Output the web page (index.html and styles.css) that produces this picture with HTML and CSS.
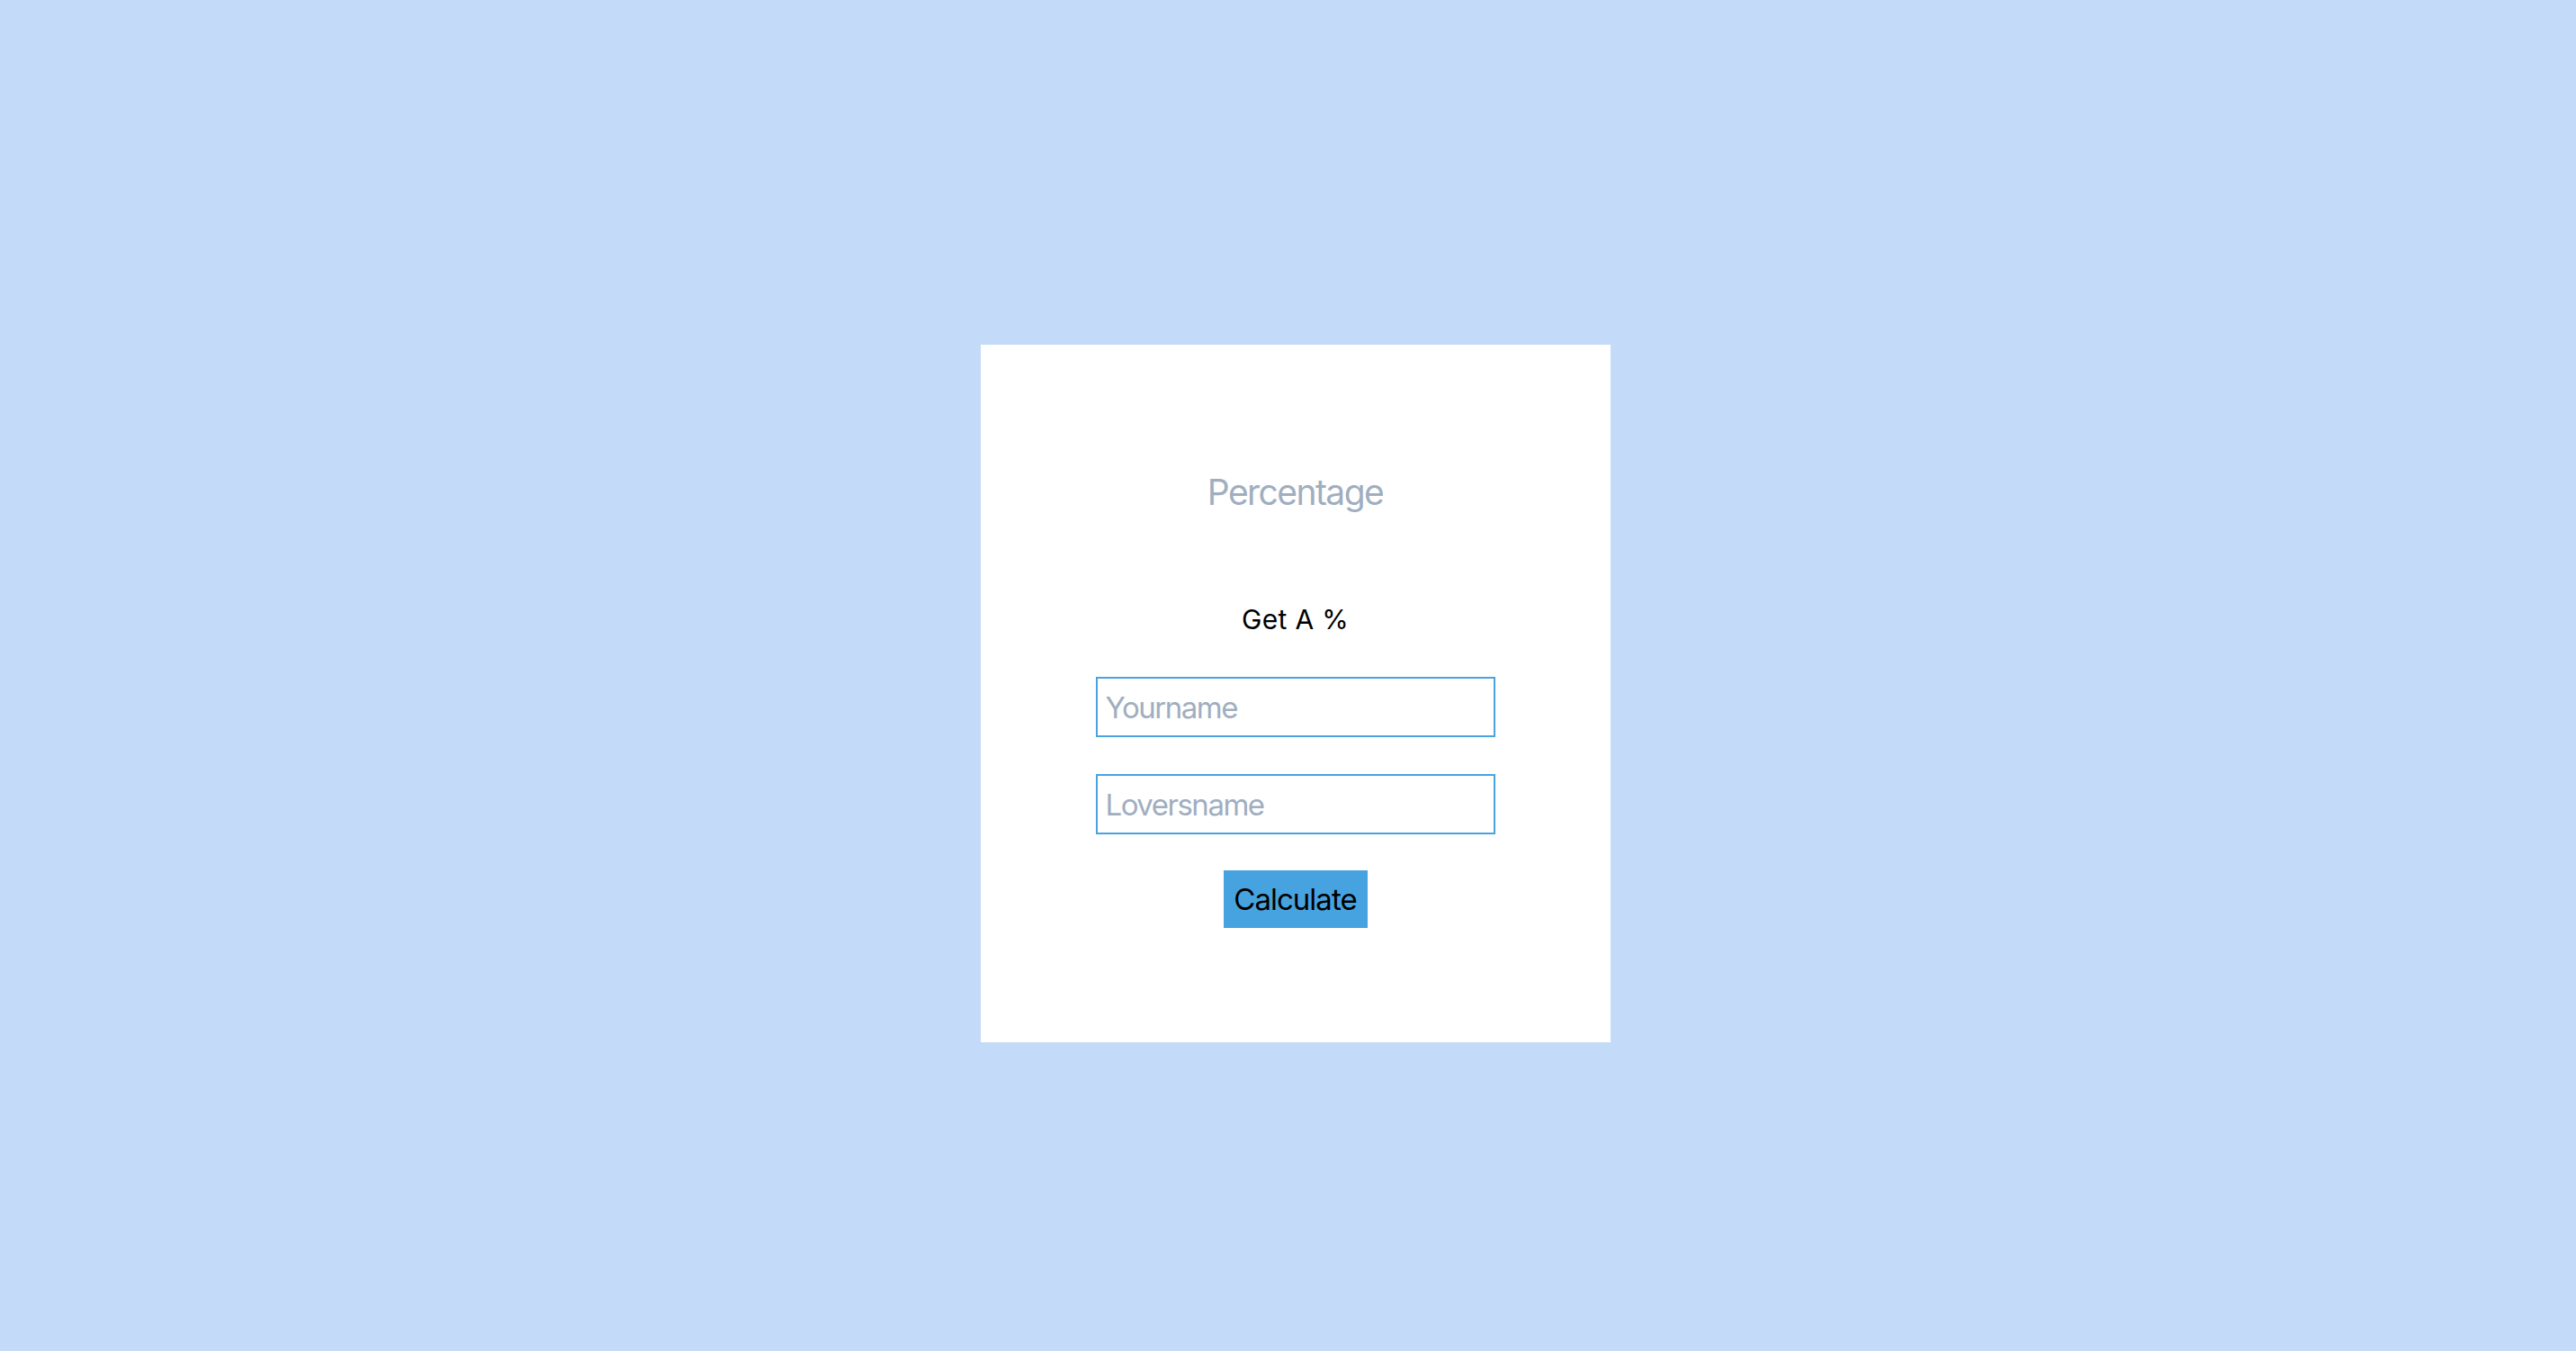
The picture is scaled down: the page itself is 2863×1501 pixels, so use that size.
FILE: index.html
```html
<!DOCTYPE html>
<html lang="en">
<head>
<meta charset="utf-8">
<title>Percentage</title>
<link rel="stylesheet" href="styles.css">
</head>
<body>
<main class="page">
  <section class="card">
    <h1 class="title">Percentage</h1>
    <h2 class="subtitle">Get A %</h2>
    <form class="form">
      <input class="field" type="text" placeholder="Yourname">
      <input class="field" type="text" placeholder="Loversname">
      <button class="btn" type="button">Calculate</button>
    </form>
  </section>
</main>
</body>
</html>
```

FILE: styles.css
```css
* { box-sizing: border-box; }
html, body { margin: 0; padding: 0; }
body {
  background: #c3dbf8;
  font-family: Inter, "Noto Sans", "Liberation Sans", sans-serif;
  color: #000;
}
.page {
  min-height: 100vh;
  display: flex;
  align-items: center;
  justify-content: center;
  padding: 40px 0 0 16px;
}
.card {
  width: 700px;
  background: #fff;
  display: flex;
  flex-direction: column;
  align-items: center;
  padding: 144px 0 127px;
}
.title {
  margin: 0;
  font-size: 39px;
  line-height: 40px;
  font-weight: 400;
  letter-spacing: -0.04em;
  color: #a0aec0;
}
.subtitle {
  margin: 106px 0 0;
  font-size: 30px;
  line-height: 30px;
  font-weight: 400;
  letter-spacing: 0.01em;
}
.form {
  margin-top: 49px;
  display: flex;
  flex-direction: column;
  align-items: center;
}
.field {
  width: 444px;
  height: 67px;
  border: 2px solid #4aa3df;
  border-radius: 0;
  padding: 0 9px;
  font-family: inherit;
  font-size: 33px;
  letter-spacing: -0.045em;
  color: #000;
  background: #fff;
  outline: none;
}
.field + .field { margin-top: 41px; }
.field::placeholder { color: #a0aec0; }
.btn {
  margin-top: 40px;
  width: 160px;
  height: 64px;
  border: 0;
  border-radius: 0;
  background: #47a3e0;
  color: #000;
  font-family: inherit;
  font-size: 33px;
  letter-spacing: -0.03em;
  padding: 0;
  cursor: pointer;
}
```
